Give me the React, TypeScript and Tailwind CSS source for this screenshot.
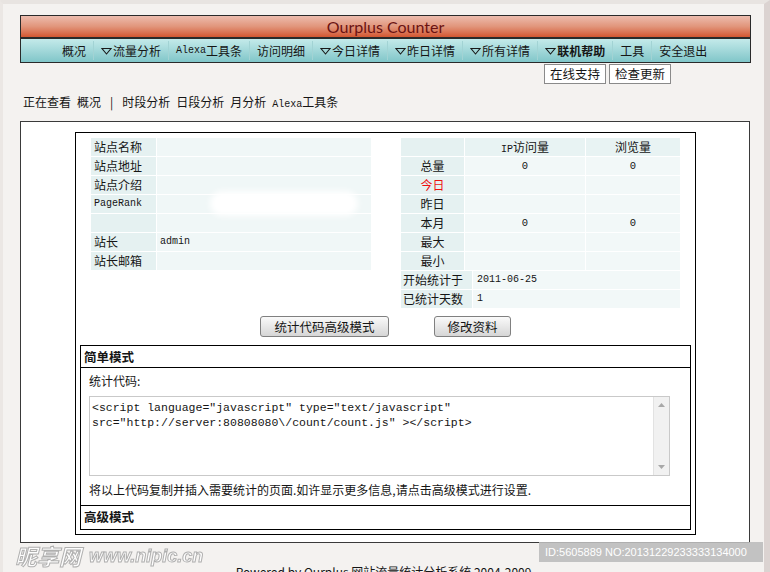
import React from "react"

const mono = "font-['Liberation_Mono','Noto_Sans_CJK_SC',monospace]"

const Tri = () => (
    <svg width="11" height="8" viewBox="0 0 11 8" className="mr-px shrink-0">
        <polygon points="1,1.5 10,1.5 5.5,7" fill="none" stroke="#1a1a1a" strokeWidth="1.1" />
    </svg>
)

const Sep = () => <div className="w-px h-[19px] bg-[#a2d3d4]" />

interface NavItem {
    label: React.ReactNode
    drop?: boolean
    bold?: boolean
}

const navItems: NavItem[] = [
    { label: "概况" },
    { label: "流量分析", drop: true },
    { label: <><span className={`${mono} text-[10px]`}>Alexa</span>工具条</> },
    { label: "访问明细" },
    { label: "今日详情", drop: true },
    { label: "昨日详情", drop: true },
    { label: "所有详情", drop: true },
    { label: "联机帮助", drop: true, bold: true },
    { label: "工具" },
    { label: "安全退出" },
]

const siteRows = [
    { k: "站点名称", v: "" },
    { k: "站点地址", v: "" },
    { k: "站点介绍", v: "" },
    { k: "PageRank", v: "", mono: true },
    { k: "", v: "" },
    { k: "站长", v: "admin" },
    { k: "站长邮箱", v: "" },
]

const statRows = [
    { k: "总量", ip: "0", pv: "0" },
    { k: "今日", ip: "", pv: "", red: true },
    { k: "昨日", ip: "", pv: "" },
    { k: "本月", ip: "0", pv: "0" },
    { k: "最大", ip: "", pv: "" },
    { k: "最小", ip: "", pv: "" },
]

export default function App() {
    return (
        <div className="relative h-[572px] w-[770px] overflow-hidden bg-[#f4f2f0] border-t-[4px] border-t-[#e8e4e1] border-l-[3px] border-l-[#ebe7e4] border-r-[6px] border-r-[#dbd3d1] text-[12px] text-[#151515] font-['Noto_Sans_CJK_SC','Liberation_Sans',sans-serif]">

            {/* header */}
            <div className="ml-[17px] mt-[11px] w-[731px] border border-[#2a2a2a]">
                <div className="h-[23px] border-b-2 border-[#2a2a2a] bg-linear-to-b from-[#ecbcae] via-[#e1957b] to-[#d25630] flex items-center justify-center">
                    <span className="font-['Lato','Open_Sans',sans-serif] text-[16px] text-[#6a1212] leading-none">Ourplus Counter</span>
                </div>
                <div className="h-[23px] bg-linear-to-b from-[#c4eaea] to-[#80c6c9] flex items-center pl-[34px] text-[12px]">
                    {navItems.map((item, i) => (
                        <React.Fragment key={i}>
                            {i > 0 && <Sep />}
                            <div className={`px-[7px] flex items-center whitespace-nowrap ${item.bold ? "font-bold" : ""}`}>
                                {item.drop && <Tri />}
                                {item.label}
                            </div>
                        </React.Fragment>
                    ))}
                </div>
            </div>

            <div className="flex gap-[3px] pl-[541px] mt-px">
                <div className="h-[20px] px-[5px] border border-[#8a8a8a] bg-white text-[12.5px] leading-[18px]">在线支持</div>
                <div className="h-[20px] px-[5px] border border-[#8a8a8a] bg-white text-[12.5px] leading-[18px]">检查更新</div>
            </div>

            {/* breadcrumb */}
            <div className="ml-[20px] mt-[10px] h-[16px] leading-[16px] flex gap-[6px] whitespace-nowrap">
                <span>正在查看</span>
                <span>概况</span>
                <span className="px-[3px]">|</span>
                <span>时段分析</span>
                <span>日段分析</span>
                <span>月分析</span>
                <span><span className={`${mono} text-[10px]`}>Alexa</span>工具条</span>
            </div>

            {/* main panel */}
            <div className="ml-[17px] mt-[11px] w-[730px] h-[422px] border border-[#3a3a3a] bg-white">
                <div className="ml-[54px] mt-[10px] w-[621px] h-[403px] border border-black">

                    <div className="pt-[5px] pl-[15px] flex gap-[30px]">
                        {/* site info */}
                        <div className="relative w-[280px] flex flex-col gap-px bg-white">
                            {siteRows.map((r, i) => (
                                <div key={i} className="h-[18px] flex gap-px">
                                    <div className={`w-[65px] bg-[#e5f1f1] pl-[3px] leading-[18px] ${r.mono ? `${mono} text-[10px]` : ""}`}>{r.k}</div>
                                    <div className={`flex-1 bg-[#f0f7f7] pl-[3px] leading-[18px] ${mono} text-[10px]`}>{r.v}</div>
                                </div>
                            ))}
                            <div className="absolute left-[119px] top-[53px] w-[148px] h-[25px] rounded-full bg-white blur-[3px]" />
                        </div>

                        {/* stats */}
                        <div className="w-[279px] flex flex-col gap-px bg-white">
                            <div className="h-[18px] flex gap-px">
                                <div className="w-[63px] bg-[#e5f1f1]" />
                                <div className="w-[120px] bg-[#e8f3f3] text-center leading-[18px]"><span className={`${mono} text-[10px]`}>IP</span>访问量</div>
                                <div className="flex-1 bg-[#e8f3f3] text-center leading-[18px]">浏览量</div>
                            </div>
                            {statRows.map((r, i) => (
                                <div key={i} className="h-[18px] flex gap-px">
                                    <div className={`w-[63px] bg-[#e5f1f1] text-center leading-[18px] ${r.red ? "text-[#ee1111]" : ""}`}>{r.k}</div>
                                    <div className={`w-[120px] bg-[#f2f8f8] text-center leading-[18px] ${mono} text-[10.5px]`}>{r.ip}</div>
                                    <div className={`flex-1 bg-[#f2f8f8] text-center leading-[18px] ${mono} text-[10.5px]`}>{r.pv}</div>
                                </div>
                            ))}
                            <div className="h-[18px] flex gap-px">
                                <div className="w-[71px] bg-[#e5f1f1] pl-[2px] leading-[18px]">开始统计于</div>
                                <div className={`flex-1 bg-[#f2f8f8] pl-[4px] leading-[18px] ${mono} text-[10px]`}>2011-06-25</div>
                            </div>
                            <div className="h-[18px] flex gap-px">
                                <div className="w-[71px] bg-[#e5f1f1] pl-[2px] leading-[18px]">已统计天数</div>
                                <div className={`flex-1 bg-[#f2f8f8] pl-[4px] leading-[18px] ${mono} text-[10px]`}>1</div>
                            </div>
                        </div>
                    </div>

                    <div className="mt-[8px] flex justify-center gap-[45px]">
                        <div className="w-[129px] h-[21px] rounded-[3px] border border-[#808080] bg-linear-to-b from-[#fafafa] to-[#d6d6d6] text-center text-[12.5px] leading-[19px]">统计代码高级模式</div>
                        <div className="w-[77px] h-[21px] rounded-[3px] border border-[#808080] bg-linear-to-b from-[#fafafa] to-[#d6d6d6] text-center text-[12.5px] leading-[19px]">修改资料</div>
                    </div>

                    {/* code box */}
                    <div className="mx-[4px] mt-[8px] h-[185px] border border-black">
                        <div className="h-[22px] border-b border-black pl-[3px] font-bold text-[12.5px] leading-[22px]">简单模式</div>
                        <div className="pt-[5px] pl-[8px] leading-[16px]">统计代码:</div>
                        <div className="ml-[8px] mt-[7px] w-[581px] h-[80px] border border-[#c9c9c9] flex">
                            <div className={`flex-1 pl-[2px] pt-[3px] ${mono} text-[11.5px] leading-[15px] whitespace-pre`}>
                                {'<script language="javascript" type="text/javascript"\nsrc="http://server:80808080\\/count/count.js" ></script>'}
                            </div>
                            <div className="w-[16px] bg-[#f1f1f1] border-l border-[#e2e2e2] flex flex-col justify-between items-center py-[6px]">
                                <svg width="7" height="4" viewBox="0 0 7 4"><polygon points="0,4 7,4 3.5,0" fill="#a8a8a8" /></svg>
                                <svg width="7" height="4" viewBox="0 0 7 4"><polygon points="0,0 7,0 3.5,4" fill="#a8a8a8" /></svg>
                            </div>
                        </div>
                        <div className="mt-[6px] pl-[8px] leading-[16px] whitespace-nowrap">将以上代码复制并插入需要统计的页面.如许显示更多信息,请点击高级模式进行设置.</div>
                        <div className="mt-[7px] h-[22px] border-t border-black pl-[3px] font-bold text-[12.5px] leading-[22px]">高级模式</div>
                    </div>
                </div>
            </div>

            <div className="mt-[21px] text-center leading-[16px] whitespace-nowrap">Powered by Ourplus 网站流量统计分析系统 2004-2009</div>

            {/* watermarks */}
            <div className="absolute left-[12px] top-[539px] flex items-end gap-[8px] italic font-bold text-white [-webkit-text-stroke:1px_#a9a9a9] opacity-90">
                <span className="text-[22px] leading-[24px]">昵享网</span>
                <span className="text-[18px] leading-[22px] font-['Liberation_Sans',sans-serif]">www.nipic.cn</span>
            </div>
            <div className="absolute left-[536px] top-[538px] w-[224px] h-[20px] bg-[#bcbcbc]/90 text-white text-[11px] leading-[20px] pl-[6px] font-['Liberation_Sans',sans-serif] whitespace-nowrap">
                ID:5605889 NO:20131229233333134000
            </div>
        </div>
    )
}
